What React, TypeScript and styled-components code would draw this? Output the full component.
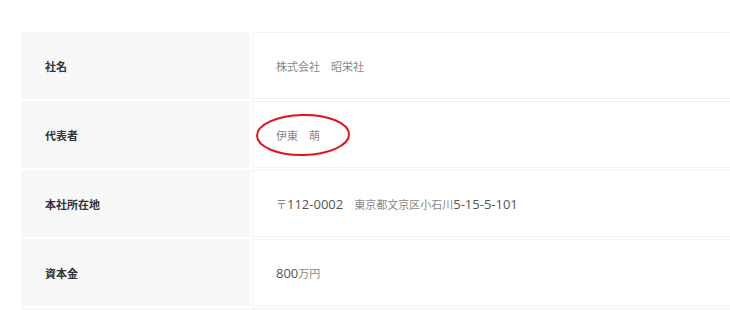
import type { ReactNode } from 'react'
import styled, { createGlobalStyle } from 'styled-components'

const GlobalStyle = createGlobalStyle`
  html, body {
    margin: 0;
    padding: 0;
    background: #ffffff;
    overflow: hidden;
  }
`

const Page = styled.div`
  width: 730px;
  height: 310px;
  padding: 30px 0 0 19px;
  box-sizing: border-box;
  overflow: hidden;
`

const Table = styled.table`
  width: 760px;
  border-collapse: separate;
  border-spacing: 2px;
  table-layout: fixed;
`

const Th = styled.th`
  width: 229px;
  height: 67px;
  padding: 0 0 0 24px;
  box-sizing: border-box;
  background: #f7f7f7;
  text-align: left;
  vertical-align: middle;
  font-family: 'Noto Sans CJK JP', sans-serif;
  font-size: 11px;
  font-weight: 700;
  color: #333333;
`

const Td = styled.td`
  height: 67px;
  padding: 0 0 0 23px;
  box-sizing: border-box;
  background: #ffffff;
  border: 1px solid #f3f3f3;
  vertical-align: middle;
  font-family: 'Noto Sans CJK JP', sans-serif;
  font-size: 11px;
  color: #888888;
`

const ValueWrap = styled.div`
  position: relative;
  display: inline-block;
  line-height: 16px;
`

const Num = styled.span`
  font-family: 'Open Sans', sans-serif;
  font-size: 13px;
  color: #555555;
`

const Circle = styled.svg`
  position: absolute;
  left: -21px;
  top: -14px;
  pointer-events: none;
`

type Row = {
  label: string
  value: ReactNode
  marked?: boolean
}

const rows: Row[] = [
  { label: '社名', value: '株式会社　昭栄社' },
  { label: '代表者', value: '伊東　萌', marked: true },
  {
    label: '本社所在地',
    value: (
      <>
        〒<Num>112-0002</Num>　東京都文京区小石川<Num>5-15-5-101</Num>
      </>
    ),
  },
  {
    label: '資本金',
    value: (
      <>
        <Num>800</Num>万円
      </>
    ),
  },
  { label: '', value: '' },
]

export default function App() {
  return (
    <>
      <GlobalStyle />
      <Page>
        <Table>
          <tbody>
            {rows.map((row, i) => (
              <tr key={i}>
                <Th>{row.label}</Th>
                <Td>
                  <ValueWrap>
                    {row.value}
                    {row.marked && (
                      <Circle viewBox="0 0 96 44" width="96" height="44">
                        <ellipse
                          cx="48"
                          cy="22"
                          rx="46"
                          ry="20"
                          fill="none"
                          stroke="#e0121b"
                          strokeWidth="2"
                          transform="rotate(-1 48 22)"
                        />
                      </Circle>
                    )}
                  </ValueWrap>
                </Td>
              </tr>
            ))}
          </tbody>
        </Table>
      </Page>
    </>
  )
}
